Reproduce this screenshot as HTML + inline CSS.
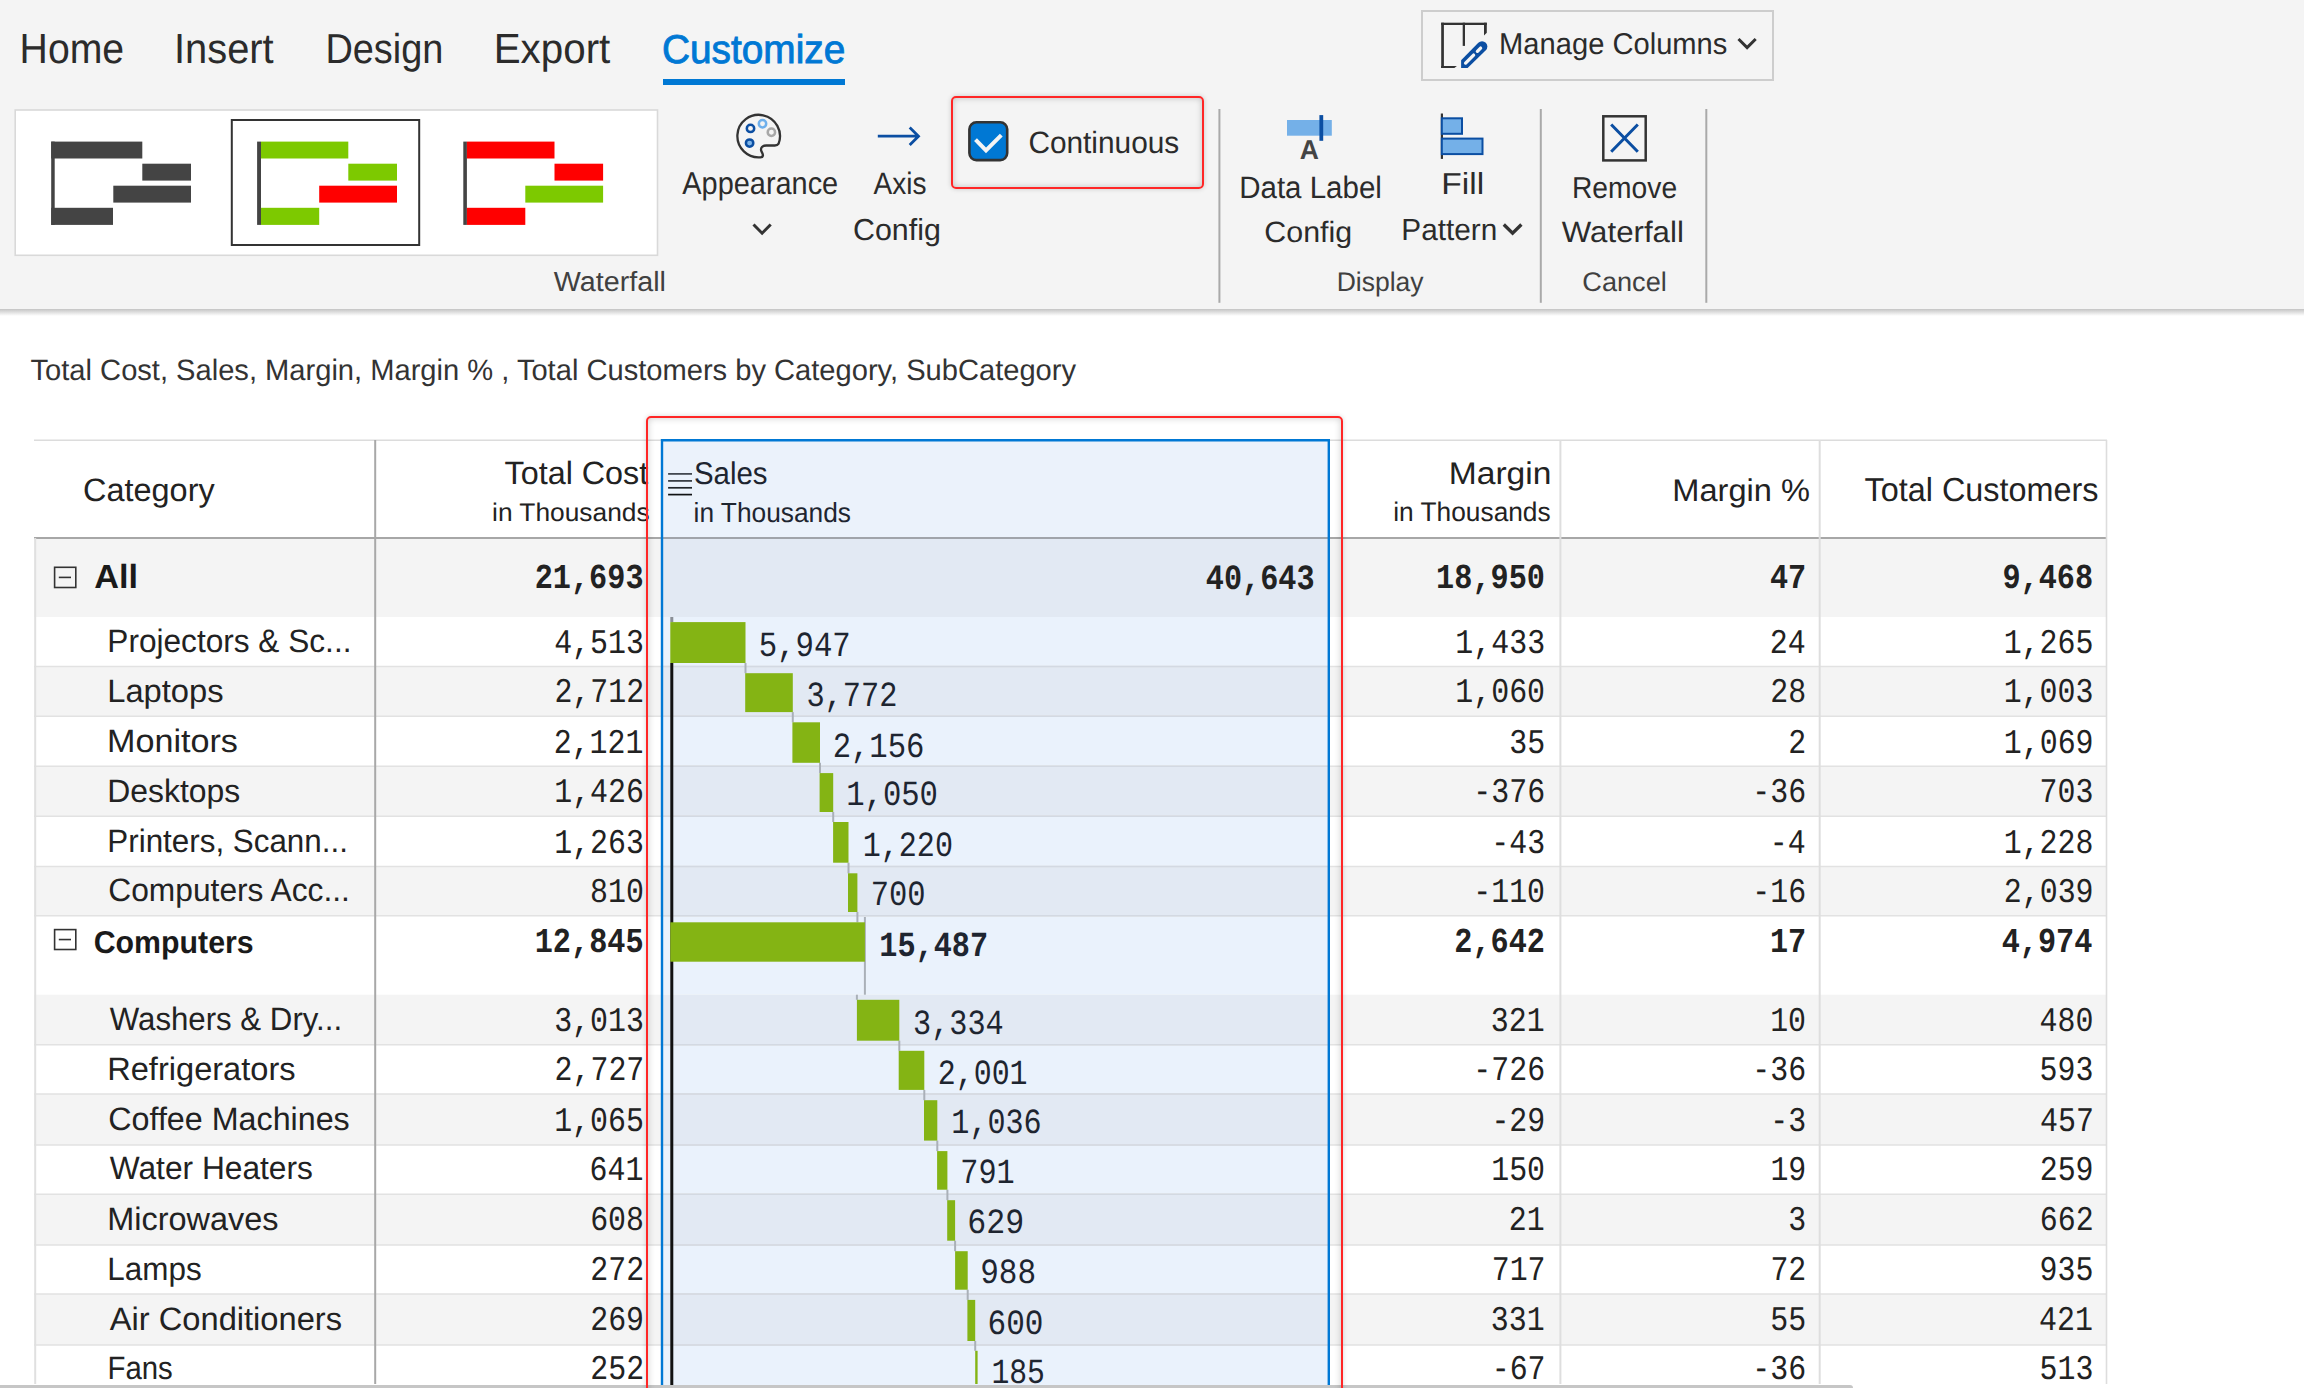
<!DOCTYPE html>
<html><head><meta charset="utf-8"><title>Waterfall</title>
<style>
html,body{margin:0;padding:0;background:#fff;width:2304px;height:1388px;overflow:hidden;font-family:"Liberation Sans",sans-serif;}
#pg{position:relative;width:2304px;height:1388px;overflow:hidden;}
svg{position:absolute;left:0;top:0;}
.hl{position:absolute;box-sizing:border-box;border:2px solid #ff2626;border-radius:5px;}
</style></head><body><div id="pg">
<svg width="2304" height="1388" viewBox="0 0 2304 1388" text-rendering="geometricPrecision">
<rect x="0.00" y="0.00" width="2304.00" height="309.00" fill="#f4f4f4"/>
<defs><linearGradient id="rsh" x1="0" y1="0" x2="0" y2="1"><stop offset="0" stop-color="#c4c4c4"/><stop offset="1" stop-color="#ffffff"/></linearGradient></defs>
<rect x="0.00" y="309.00" width="2304.00" height="7.00" fill="url(#rsh)"/>
<text x="19.58" y="63.00" font-family='"Liberation Sans", sans-serif' font-size="42.08" font-weight="400" fill="#2b2b2b" textLength="104.56" lengthAdjust="spacingAndGlyphs">Home</text>
<text x="174.02" y="63.00" font-family='"Liberation Sans", sans-serif' font-size="42.08" font-weight="400" fill="#2b2b2b" textLength="99.67" lengthAdjust="spacingAndGlyphs">Insert</text>
<text x="325.39" y="63.00" font-family='"Liberation Sans", sans-serif' font-size="41.80" font-weight="400" fill="#2b2b2b" textLength="118.07" lengthAdjust="spacingAndGlyphs">Design</text>
<text x="493.69" y="63.00" font-family='"Liberation Sans", sans-serif' font-size="42.08" font-weight="400" fill="#2b2b2b" textLength="116.61" lengthAdjust="spacingAndGlyphs">Export</text>
<text x="662.03" y="62.70" font-family='"Liberation Sans", sans-serif' font-size="40.26" font-weight="400" fill="#0078d4" textLength="183.29" lengthAdjust="spacingAndGlyphs" stroke="#0078d4" stroke-width="0.90">Customize</text>
<rect x="663.00" y="79.00" width="182.00" height="6.00" fill="#0078d4"/>
<rect x="1422" y="11" width="351" height="69" fill="none" stroke="#cdcdcd" stroke-width="2"/>
<rect x="1441.20" y="22.70" width="2.70" height="45.30" fill="#333"/>
<rect x="1441.20" y="22.70" width="45.60" height="2.30" fill="#333"/>
<rect x="1462.70" y="22.70" width="2.30" height="23.20" fill="#333"/>
<path d="M1441.2,65.9 L1456.9,65.9 L1454.4,68 L1441.2,68 Z" fill="#333"/>
<path d="M1484,22.7 L1486.8,22.7 L1486.8,32.7 L1484,35.6 Z" fill="#333"/>
<path d="M1461.1,68 L1461.1,60.3 L1478.3,42.8 A5.3,5.3 0 0 1 1485.8,50.3 L1467.6,68 Z" fill="#0b4ea2"/>
<path d="M1465.6,63.1 L1473.6,55.1 M1477.4,51.3 L1480.6,48.1" stroke="#f4f4f4" stroke-width="3.3" stroke-linecap="round"/>
<text x="1499.11" y="54.40" font-family='"Liberation Sans", sans-serif' font-size="30.02" font-weight="400" fill="#2b2b2b" textLength="228.24" lengthAdjust="spacingAndGlyphs">Manage Columns</text>
<path d="M1738.5,39 L1747.1,47.6 L1755.7,39" fill="none" stroke="#333" stroke-width="3"/>
<rect x="15.2" y="110" width="642.3" height="145.3" fill="#fff" stroke="#d9d9d9" stroke-width="1.6"/>
<rect x="231.8" y="120" width="187.4" height="125" fill="none" stroke="#333" stroke-width="2"/>
<rect x="51.20" y="141.60" width="91.10" height="16.90" fill="#444"/>
<rect x="51.20" y="141.60" width="3.50" height="83.30" fill="#444"/>
<rect x="142.30" y="163.70" width="48.70" height="16.90" fill="#444"/>
<rect x="113.30" y="185.70" width="77.70" height="16.90" fill="#444"/>
<rect x="51.20" y="207.80" width="61.80" height="17.10" fill="#444"/>
<rect x="257.10" y="141.60" width="3.90" height="83.30" fill="#444"/>
<rect x="261.00" y="141.60" width="87.30" height="16.90" fill="#7dc900"/>
<rect x="348.30" y="163.70" width="48.70" height="16.90" fill="#7dc900"/>
<rect x="319.20" y="185.70" width="77.80" height="16.90" fill="#ff0000"/>
<rect x="261.00" y="207.80" width="58.20" height="17.10" fill="#7dc900"/>
<rect x="463.30" y="141.60" width="3.60" height="83.30" fill="#444"/>
<rect x="466.90" y="141.60" width="87.60" height="16.90" fill="#ff0000"/>
<rect x="554.50" y="163.70" width="48.60" height="16.90" fill="#ff0000"/>
<rect x="525.30" y="185.70" width="77.80" height="16.90" fill="#7dc900"/>
<rect x="466.90" y="207.80" width="58.40" height="17.10" fill="#ff0000"/>
<path d="M760.6,157.3 A21.3,21.3 0 1 1 778.6,143.6 C777.8,145 776.6,145.5 774.8,145.5 L766.2,145.5 C762.4,145.5 760.4,148 761.2,150.6 C761.8,152.6 763.2,153.8 762.9,155.6 C762.6,156.8 761.8,157.3 760.6,157.3 Z" fill="none" stroke="#333" stroke-width="2.3"/>
<circle cx="750.5" cy="128.4" r="3.7" fill="#f4f4f4" stroke="#0b4ea2" stroke-width="2.5"/>
<circle cx="762.5" cy="123.7" r="3.7" fill="#f4f4f4" stroke="#6fb0ec" stroke-width="2.5"/>
<circle cx="771.4" cy="132.2" r="3.7" fill="#f4f4f4" stroke="#a8a8a8" stroke-width="2.5"/>
<circle cx="749.6" cy="143.1" r="3.7" fill="#7fb6ea" stroke="#0b4ea2" stroke-width="2.5"/>
<text x="682.34" y="194.00" font-family='"Liberation Sans", sans-serif' font-size="31.56" font-weight="400" fill="#2b2b2b" textLength="155.84" lengthAdjust="spacingAndGlyphs">Appearance</text>
<path d="M753.5,224.5 L762.1,233.2 L770.7,224.5" fill="none" stroke="#333" stroke-width="3"/>
<path d="M877.8,136.2 L918.5,136.2 M909.7,127.6 L918.5,136.2 L909.7,144.9" fill="none" stroke="#0b4ea2" stroke-width="2.8"/>
<text x="873.45" y="194.00" font-family='"Liberation Sans", sans-serif' font-size="31.00" font-weight="400" fill="#2b2b2b" textLength="52.97" lengthAdjust="spacingAndGlyphs">Axis</text>
<text x="853.06" y="240.00" font-family='"Liberation Sans", sans-serif' font-size="30.30" font-weight="400" fill="#2b2b2b" textLength="87.80" lengthAdjust="spacingAndGlyphs">Config</text>
<rect x="969.4" y="122.3" width="37.8" height="37.8" rx="7" fill="#0078d4" stroke="#333" stroke-width="2.6"/>
<path d="M975.5,139.6 L986,150.4 L1001.3,135.2" fill="none" stroke="#f4f4f4" stroke-width="4"/>
<text x="1028.39" y="153.40" font-family='"Liberation Sans", sans-serif' font-size="30.86" font-weight="400" fill="#2b2b2b" textLength="150.89" lengthAdjust="spacingAndGlyphs">Continuous</text>
<line x1="1219.40" y1="109.00" x2="1219.40" y2="302.80" stroke="#a9a9a9" stroke-width="2.00"/>
<line x1="1540.80" y1="109.00" x2="1540.80" y2="302.80" stroke="#a9a9a9" stroke-width="2.00"/>
<line x1="1706.30" y1="109.00" x2="1706.30" y2="302.80" stroke="#a9a9a9" stroke-width="2.00"/>
<rect x="1287.00" y="120.00" width="44.80" height="15.70" fill="#74b0e8"/>
<rect x="1319.40" y="115.10" width="3.80" height="25.70" fill="#0b4ea2"/>
<text x="1299.84" y="158.90" font-family='"Liberation Sans", sans-serif' font-size="27.35" font-weight="700" fill="#444" textLength="19.16" lengthAdjust="spacingAndGlyphs">A</text>
<text x="1239.18" y="198.30" font-family='"Liberation Sans", sans-serif' font-size="31.00" font-weight="400" fill="#2b2b2b" textLength="142.69" lengthAdjust="spacingAndGlyphs">Data Label</text>
<text x="1264.36" y="242.00" font-family='"Liberation Sans", sans-serif' font-size="29.46" font-weight="400" fill="#2b2b2b" textLength="87.80" lengthAdjust="spacingAndGlyphs">Config</text>
<rect x="1440.80" y="113.50" width="2.20" height="45.40" fill="#333"/>
<rect x="1441.8" y="118.3" width="20.2" height="15.5" fill="#74b0e8" stroke="#0b4ea2" stroke-width="2"/>
<rect x="1441.8" y="138.6" width="40.7" height="15.5" fill="#74b0e8" stroke="#0b4ea2" stroke-width="2"/>
<text x="1441.24" y="193.80" font-family='"Liberation Sans", sans-serif' font-size="30.30" font-weight="400" fill="#2b2b2b" textLength="42.90" lengthAdjust="spacingAndGlyphs">Fill</text>
<text x="1401.36" y="240.00" font-family='"Liberation Sans", sans-serif' font-size="30.44" font-weight="400" fill="#2b2b2b" textLength="95.98" lengthAdjust="spacingAndGlyphs">Pattern</text>
<path d="M1503.8,224.5 L1512.6,233.2 L1521.4,224.5" fill="none" stroke="#333" stroke-width="3.3"/>
<rect x="1603.3" y="116.3" width="42.4" height="44.1" fill="none" stroke="#333" stroke-width="2.5"/>
<path d="M1611.2,124.5 L1637.8,151.7 M1637.8,124.5 L1611.2,151.7" stroke="#0b4ea2" stroke-width="3"/>
<text x="1571.98" y="198.30" font-family='"Liberation Sans", sans-serif' font-size="30.30" font-weight="400" fill="#2b2b2b" textLength="105.17" lengthAdjust="spacingAndGlyphs">Remove</text>
<text x="1561.76" y="242.10" font-family='"Liberation Sans", sans-serif' font-size="29.60" font-weight="400" fill="#2b2b2b" textLength="122.11" lengthAdjust="spacingAndGlyphs">Waterfall</text>
<text x="553.78" y="291.00" font-family='"Liberation Sans", sans-serif' font-size="27.77" font-weight="400" fill="#404040" textLength="112.13" lengthAdjust="spacingAndGlyphs">Waterfall</text>
<text x="1336.63" y="290.80" font-family='"Liberation Sans", sans-serif' font-size="26.93" font-weight="400" fill="#404040" textLength="86.93" lengthAdjust="spacingAndGlyphs">Display</text>
<text x="1582.32" y="290.80" font-family='"Liberation Sans", sans-serif' font-size="26.93" font-weight="400" fill="#404040" textLength="84.49" lengthAdjust="spacingAndGlyphs">Cancel</text>
<text x="30.55" y="379.80" font-family='"Liberation Sans", sans-serif' font-size="29.53" font-weight="400" fill="#333" textLength="1045.50" lengthAdjust="spacingAndGlyphs">Total Cost, Sales, Margin, Margin % , Total Customers by Category, SubCategory</text>
<rect x="34.00" y="440.00" width="2073.00" height="98.00" fill="#ffffff"/>
<rect x="34.00" y="538.00" width="2073.00" height="79.00" fill="#f4f4f4"/>
<rect x="661.00" y="538.00" width="669.00" height="79.00" fill="#e2e9f3"/>
<rect x="34.00" y="617.00" width="2073.00" height="49.50" fill="#ffffff"/>
<rect x="661.00" y="617.00" width="669.00" height="49.50" fill="#eaf2fc"/>
<rect x="34.00" y="666.50" width="2073.00" height="49.80" fill="#f4f4f4"/>
<rect x="661.00" y="666.50" width="669.00" height="49.80" fill="#e2e9f3"/>
<rect x="34.00" y="716.30" width="2073.00" height="49.90" fill="#ffffff"/>
<rect x="661.00" y="716.30" width="669.00" height="49.90" fill="#eaf2fc"/>
<rect x="34.00" y="766.20" width="2073.00" height="50.00" fill="#f4f4f4"/>
<rect x="661.00" y="766.20" width="669.00" height="50.00" fill="#e2e9f3"/>
<rect x="34.00" y="816.20" width="2073.00" height="50.30" fill="#ffffff"/>
<rect x="661.00" y="816.20" width="669.00" height="50.30" fill="#eaf2fc"/>
<rect x="34.00" y="866.50" width="2073.00" height="49.30" fill="#f4f4f4"/>
<rect x="661.00" y="866.50" width="669.00" height="49.30" fill="#e2e9f3"/>
<rect x="34.00" y="915.80" width="2073.00" height="78.90" fill="#ffffff"/>
<rect x="661.00" y="915.80" width="669.00" height="78.90" fill="#eaf2fc"/>
<rect x="34.00" y="994.70" width="2073.00" height="50.10" fill="#f4f4f4"/>
<rect x="661.00" y="994.70" width="669.00" height="50.10" fill="#e2e9f3"/>
<rect x="34.00" y="1044.80" width="2073.00" height="49.20" fill="#ffffff"/>
<rect x="661.00" y="1044.80" width="669.00" height="49.20" fill="#eaf2fc"/>
<rect x="34.00" y="1094.00" width="2073.00" height="51.00" fill="#f4f4f4"/>
<rect x="661.00" y="1094.00" width="669.00" height="51.00" fill="#e2e9f3"/>
<rect x="34.00" y="1145.00" width="2073.00" height="49.20" fill="#ffffff"/>
<rect x="661.00" y="1145.00" width="669.00" height="49.20" fill="#eaf2fc"/>
<rect x="34.00" y="1194.20" width="2073.00" height="50.80" fill="#f4f4f4"/>
<rect x="661.00" y="1194.20" width="669.00" height="50.80" fill="#e2e9f3"/>
<rect x="34.00" y="1245.00" width="2073.00" height="49.00" fill="#ffffff"/>
<rect x="661.00" y="1245.00" width="669.00" height="49.00" fill="#eaf2fc"/>
<rect x="34.00" y="1294.00" width="2073.00" height="51.00" fill="#f4f4f4"/>
<rect x="661.00" y="1294.00" width="669.00" height="51.00" fill="#e2e9f3"/>
<rect x="34.00" y="1345.00" width="2073.00" height="43.00" fill="#ffffff"/>
<rect x="661.00" y="1345.00" width="669.00" height="43.00" fill="#eaf2fc"/>
<rect x="661.00" y="440.00" width="669.00" height="98.00" fill="#ebf2fb"/>
<line x1="34.00" y1="666.50" x2="2107.00" y2="666.50" stroke="#e2e2e2" stroke-width="1.60"/>
<line x1="661.00" y1="666.50" x2="1330.00" y2="666.50" stroke="#d3d9e2" stroke-width="1.60"/>
<line x1="34.00" y1="716.30" x2="2107.00" y2="716.30" stroke="#e2e2e2" stroke-width="1.60"/>
<line x1="661.00" y1="716.30" x2="1330.00" y2="716.30" stroke="#d3d9e2" stroke-width="1.60"/>
<line x1="34.00" y1="766.20" x2="2107.00" y2="766.20" stroke="#e2e2e2" stroke-width="1.60"/>
<line x1="661.00" y1="766.20" x2="1330.00" y2="766.20" stroke="#d3d9e2" stroke-width="1.60"/>
<line x1="34.00" y1="816.20" x2="2107.00" y2="816.20" stroke="#e2e2e2" stroke-width="1.60"/>
<line x1="661.00" y1="816.20" x2="1330.00" y2="816.20" stroke="#d3d9e2" stroke-width="1.60"/>
<line x1="34.00" y1="866.50" x2="2107.00" y2="866.50" stroke="#e2e2e2" stroke-width="1.60"/>
<line x1="661.00" y1="866.50" x2="1330.00" y2="866.50" stroke="#d3d9e2" stroke-width="1.60"/>
<line x1="34.00" y1="915.80" x2="2107.00" y2="915.80" stroke="#e2e2e2" stroke-width="1.60"/>
<line x1="661.00" y1="915.80" x2="1330.00" y2="915.80" stroke="#d3d9e2" stroke-width="1.60"/>
<line x1="34.00" y1="1044.80" x2="2107.00" y2="1044.80" stroke="#e2e2e2" stroke-width="1.60"/>
<line x1="661.00" y1="1044.80" x2="1330.00" y2="1044.80" stroke="#d3d9e2" stroke-width="1.60"/>
<line x1="34.00" y1="1094.00" x2="2107.00" y2="1094.00" stroke="#e2e2e2" stroke-width="1.60"/>
<line x1="661.00" y1="1094.00" x2="1330.00" y2="1094.00" stroke="#d3d9e2" stroke-width="1.60"/>
<line x1="34.00" y1="1145.00" x2="2107.00" y2="1145.00" stroke="#e2e2e2" stroke-width="1.60"/>
<line x1="661.00" y1="1145.00" x2="1330.00" y2="1145.00" stroke="#d3d9e2" stroke-width="1.60"/>
<line x1="34.00" y1="1194.20" x2="2107.00" y2="1194.20" stroke="#e2e2e2" stroke-width="1.60"/>
<line x1="661.00" y1="1194.20" x2="1330.00" y2="1194.20" stroke="#d3d9e2" stroke-width="1.60"/>
<line x1="34.00" y1="1245.00" x2="2107.00" y2="1245.00" stroke="#e2e2e2" stroke-width="1.60"/>
<line x1="661.00" y1="1245.00" x2="1330.00" y2="1245.00" stroke="#d3d9e2" stroke-width="1.60"/>
<line x1="34.00" y1="1294.00" x2="2107.00" y2="1294.00" stroke="#e2e2e2" stroke-width="1.60"/>
<line x1="661.00" y1="1294.00" x2="1330.00" y2="1294.00" stroke="#d3d9e2" stroke-width="1.60"/>
<line x1="34.00" y1="1345.00" x2="2107.00" y2="1345.00" stroke="#e2e2e2" stroke-width="1.60"/>
<line x1="661.00" y1="1345.00" x2="1330.00" y2="1345.00" stroke="#d3d9e2" stroke-width="1.60"/>
<line x1="34.00" y1="440.30" x2="2107.00" y2="440.30" stroke="#dcdcdc" stroke-width="1.40"/>
<line x1="34.00" y1="538.00" x2="2107.00" y2="538.00" stroke="#a7a7a7" stroke-width="2.00"/>
<line x1="661.00" y1="538.00" x2="1330.00" y2="538.00" stroke="#a0a4aa" stroke-width="2.00"/>
<line x1="35.20" y1="538.00" x2="35.20" y2="1384.00" stroke="#e0e0e0" stroke-width="2.00"/>
<line x1="2106.50" y1="440.00" x2="2106.50" y2="1384.00" stroke="#dddddd" stroke-width="1.60"/>
<line x1="375.20" y1="440.00" x2="375.20" y2="1384.00" stroke="#a8a8a8" stroke-width="2.00"/>
<line x1="1560.40" y1="440.00" x2="1560.40" y2="1384.00" stroke="#dedede" stroke-width="2.00"/>
<line x1="1819.70" y1="440.00" x2="1819.70" y2="1384.00" stroke="#dedede" stroke-width="2.00"/>
<text x="83.05" y="501.20" font-family='"Liberation Sans", sans-serif' font-size="32.40" font-weight="400" fill="#222" textLength="131.61" lengthAdjust="spacingAndGlyphs">Category</text>
<text x="504.59" y="484.00" font-family='"Liberation Sans", sans-serif' font-size="32.26" font-weight="400" fill="#222" textLength="143.64" lengthAdjust="spacingAndGlyphs">Total Cost</text>
<text x="492.04" y="521.00" font-family='"Liberation Sans", sans-serif' font-size="25.53" font-weight="400" fill="#222" textLength="157.60" lengthAdjust="spacingAndGlyphs">in Thousands</text>
<text x="693.96" y="483.90" font-family='"Liberation Sans", sans-serif' font-size="31.42" font-weight="400" fill="#1e2530" textLength="73.60" lengthAdjust="spacingAndGlyphs">Sales</text>
<text x="693.55" y="521.70" font-family='"Liberation Sans", sans-serif' font-size="27.63" font-weight="400" fill="#1e2530" textLength="157.40" lengthAdjust="spacingAndGlyphs">in Thousands</text>
<text x="1448.74" y="483.90" font-family='"Liberation Sans", sans-serif' font-size="31.42" font-weight="400" fill="#222" textLength="102.74" lengthAdjust="spacingAndGlyphs">Margin</text>
<text x="1393.25" y="521.40" font-family='"Liberation Sans", sans-serif' font-size="26.79" font-weight="400" fill="#222" textLength="157.40" lengthAdjust="spacingAndGlyphs">in Thousands</text>
<text x="1672.33" y="500.90" font-family='"Liberation Sans", sans-serif' font-size="31.42" font-weight="400" fill="#222" textLength="137.63" lengthAdjust="spacingAndGlyphs">Margin %</text>
<text x="1864.58" y="501.30" font-family='"Liberation Sans", sans-serif' font-size="33.24" font-weight="400" fill="#222" textLength="233.87" lengthAdjust="spacingAndGlyphs">Total Customers</text>
<line x1="668.10" y1="473.90" x2="692.00" y2="473.90" stroke="#3a3f47" stroke-width="1.70"/>
<line x1="668.10" y1="480.90" x2="692.00" y2="480.90" stroke="#30353c" stroke-width="1.70"/>
<line x1="668.10" y1="487.80" x2="692.00" y2="487.80" stroke="#202428" stroke-width="1.70"/>
<line x1="668.10" y1="494.60" x2="692.00" y2="494.60" stroke="#101214" stroke-width="1.70"/>
<text x="94.15" y="588.30" font-family='"Liberation Sans", sans-serif' font-size="33.52" font-weight="700" fill="#1a1a1a" textLength="43.78" lengthAdjust="spacingAndGlyphs">All</text>
<rect x="54.6" y="567.30" width="21.2" height="20.20" fill="none" stroke="#333" stroke-width="1.6"/>
<line x1="58.80" y1="577.40" x2="71.00" y2="577.40" stroke="#333" stroke-width="1.60"/>
<text x="534.69" y="587.80" font-family='"Liberation Mono", monospace' font-size="35.07" font-weight="700" fill="#222" textLength="108.85" lengthAdjust="spacingAndGlyphs">21,693</text>
<text x="1436.10" y="587.80" font-family='"Liberation Mono", monospace' font-size="35.07" font-weight="700" fill="#222" textLength="108.85" lengthAdjust="spacingAndGlyphs">18,950</text>
<text x="1769.94" y="587.80" font-family='"Liberation Mono", monospace' font-size="35.07" font-weight="700" fill="#222" textLength="36.28" lengthAdjust="spacingAndGlyphs">47</text>
<text x="2002.40" y="587.80" font-family='"Liberation Mono", monospace' font-size="35.07" font-weight="700" fill="#222" textLength="90.70" lengthAdjust="spacingAndGlyphs">9,468</text>
<text x="107.31" y="652.20" font-family='"Liberation Sans", sans-serif' font-size="32.40" font-weight="400" fill="#222" textLength="244.18" lengthAdjust="spacingAndGlyphs">Projectors &amp; Sc...</text>
<text x="554.16" y="652.50" font-family='"Liberation Mono", monospace' font-size="34.61" font-weight="400" fill="#222" textLength="89.73" lengthAdjust="spacingAndGlyphs">4,513</text>
<text x="1455.36" y="652.50" font-family='"Liberation Mono", monospace' font-size="34.61" font-weight="400" fill="#222" textLength="89.73" lengthAdjust="spacingAndGlyphs">1,433</text>
<text x="1769.82" y="652.50" font-family='"Liberation Mono", monospace' font-size="34.61" font-weight="400" fill="#222" textLength="35.89" lengthAdjust="spacingAndGlyphs">24</text>
<text x="2003.66" y="652.50" font-family='"Liberation Mono", monospace' font-size="34.61" font-weight="400" fill="#222" textLength="89.73" lengthAdjust="spacingAndGlyphs">1,265</text>
<text x="107.22" y="701.80" font-family='"Liberation Sans", sans-serif' font-size="32.40" font-weight="400" fill="#222" textLength="116.36" lengthAdjust="spacingAndGlyphs">Laptops</text>
<text x="554.38" y="702.10" font-family='"Liberation Mono", monospace' font-size="34.61" font-weight="400" fill="#222" textLength="89.73" lengthAdjust="spacingAndGlyphs">2,712</text>
<text x="1455.31" y="702.10" font-family='"Liberation Mono", monospace' font-size="34.61" font-weight="400" fill="#222" textLength="89.73" lengthAdjust="spacingAndGlyphs">1,060</text>
<text x="1770.28" y="702.10" font-family='"Liberation Mono", monospace' font-size="34.61" font-weight="400" fill="#222" textLength="35.89" lengthAdjust="spacingAndGlyphs">28</text>
<text x="2003.66" y="702.10" font-family='"Liberation Mono", monospace' font-size="34.61" font-weight="400" fill="#222" textLength="89.73" lengthAdjust="spacingAndGlyphs">1,003</text>
<text x="107.10" y="752.20" font-family='"Liberation Sans", sans-serif' font-size="32.40" font-weight="400" fill="#222" textLength="130.83" lengthAdjust="spacingAndGlyphs">Monitors</text>
<text x="553.71" y="752.50" font-family='"Liberation Mono", monospace' font-size="34.61" font-weight="400" fill="#222" textLength="89.73" lengthAdjust="spacingAndGlyphs">2,121</text>
<text x="1509.20" y="752.50" font-family='"Liberation Mono", monospace' font-size="34.61" font-weight="400" fill="#222" textLength="35.89" lengthAdjust="spacingAndGlyphs">35</text>
<text x="1788.37" y="752.50" font-family='"Liberation Mono", monospace' font-size="34.61" font-weight="400" fill="#222" textLength="17.95" lengthAdjust="spacingAndGlyphs">2</text>
<text x="2003.84" y="752.50" font-family='"Liberation Mono", monospace' font-size="34.61" font-weight="400" fill="#222" textLength="89.73" lengthAdjust="spacingAndGlyphs">1,069</text>
<text x="107.29" y="801.80" font-family='"Liberation Sans", sans-serif' font-size="32.40" font-weight="400" fill="#222" textLength="132.87" lengthAdjust="spacingAndGlyphs">Desktops</text>
<text x="554.21" y="802.10" font-family='"Liberation Mono", monospace' font-size="34.61" font-weight="400" fill="#222" textLength="89.73" lengthAdjust="spacingAndGlyphs">1,426</text>
<text x="1473.35" y="802.10" font-family='"Liberation Mono", monospace' font-size="34.61" font-weight="400" fill="#222" textLength="71.79" lengthAdjust="spacingAndGlyphs">-376</text>
<text x="1752.30" y="802.10" font-family='"Liberation Mono", monospace' font-size="34.61" font-weight="400" fill="#222" textLength="53.84" lengthAdjust="spacingAndGlyphs">-36</text>
<text x="2039.56" y="802.10" font-family='"Liberation Mono", monospace' font-size="34.61" font-weight="400" fill="#222" textLength="53.84" lengthAdjust="spacingAndGlyphs">703</text>
<text x="107.33" y="852.40" font-family='"Liberation Sans", sans-serif' font-size="32.40" font-weight="400" fill="#222" textLength="240.54" lengthAdjust="spacingAndGlyphs">Printers, Scann...</text>
<text x="554.16" y="852.70" font-family='"Liberation Mono", monospace' font-size="34.61" font-weight="400" fill="#222" textLength="89.73" lengthAdjust="spacingAndGlyphs">1,263</text>
<text x="1491.26" y="852.70" font-family='"Liberation Mono", monospace' font-size="34.61" font-weight="400" fill="#222" textLength="53.84" lengthAdjust="spacingAndGlyphs">-43</text>
<text x="1769.82" y="852.70" font-family='"Liberation Mono", monospace' font-size="34.61" font-weight="400" fill="#222" textLength="35.89" lengthAdjust="spacingAndGlyphs">-4</text>
<text x="2003.74" y="852.70" font-family='"Liberation Mono", monospace' font-size="34.61" font-weight="400" fill="#222" textLength="89.73" lengthAdjust="spacingAndGlyphs">1,228</text>
<text x="108.30" y="901.30" font-family='"Liberation Sans", sans-serif' font-size="32.40" font-weight="400" fill="#222" textLength="241.58" lengthAdjust="spacingAndGlyphs">Computers Acc...</text>
<text x="590.00" y="901.60" font-family='"Liberation Mono", monospace' font-size="34.61" font-weight="400" fill="#222" textLength="53.84" lengthAdjust="spacingAndGlyphs">810</text>
<text x="1473.25" y="901.60" font-family='"Liberation Mono", monospace' font-size="34.61" font-weight="400" fill="#222" textLength="71.79" lengthAdjust="spacingAndGlyphs">-110</text>
<text x="1752.30" y="901.60" font-family='"Liberation Mono", monospace' font-size="34.61" font-weight="400" fill="#222" textLength="53.84" lengthAdjust="spacingAndGlyphs">-16</text>
<text x="2003.84" y="901.60" font-family='"Liberation Mono", monospace' font-size="34.61" font-weight="400" fill="#222" textLength="89.73" lengthAdjust="spacingAndGlyphs">2,039</text>
<text x="93.66" y="952.60" font-family='"Liberation Sans", sans-serif' font-size="31.70" font-weight="700" fill="#1a1a1a" textLength="159.99" lengthAdjust="spacingAndGlyphs">Computers</text>
<rect x="54.6" y="929.60" width="21.2" height="19.90" fill="none" stroke="#333" stroke-width="1.6"/>
<line x1="58.80" y1="939.55" x2="71.00" y2="939.55" stroke="#333" stroke-width="1.60"/>
<text x="534.72" y="952.10" font-family='"Liberation Mono", monospace' font-size="35.07" font-weight="700" fill="#222" textLength="108.85" lengthAdjust="spacingAndGlyphs">12,845</text>
<text x="1454.27" y="952.10" font-family='"Liberation Mono", monospace' font-size="35.07" font-weight="700" fill="#222" textLength="90.70" lengthAdjust="spacingAndGlyphs">2,642</text>
<text x="1769.94" y="952.10" font-family='"Liberation Mono", monospace' font-size="35.07" font-weight="700" fill="#222" textLength="36.28" lengthAdjust="spacingAndGlyphs">17</text>
<text x="2001.70" y="952.10" font-family='"Liberation Mono", monospace' font-size="35.07" font-weight="700" fill="#222" textLength="90.70" lengthAdjust="spacingAndGlyphs">4,974</text>
<text x="109.76" y="1030.30" font-family='"Liberation Sans", sans-serif' font-size="32.40" font-weight="400" fill="#222" textLength="232.34" lengthAdjust="spacingAndGlyphs">Washers &amp; Dry...</text>
<text x="554.16" y="1030.60" font-family='"Liberation Mono", monospace' font-size="34.61" font-weight="400" fill="#222" textLength="89.73" lengthAdjust="spacingAndGlyphs">3,013</text>
<text x="1490.81" y="1030.60" font-family='"Liberation Mono", monospace' font-size="34.61" font-weight="400" fill="#222" textLength="53.84" lengthAdjust="spacingAndGlyphs">321</text>
<text x="1770.15" y="1030.60" font-family='"Liberation Mono", monospace' font-size="34.61" font-weight="400" fill="#222" textLength="35.89" lengthAdjust="spacingAndGlyphs">10</text>
<text x="2039.50" y="1030.60" font-family='"Liberation Mono", monospace' font-size="34.61" font-weight="400" fill="#222" textLength="53.84" lengthAdjust="spacingAndGlyphs">480</text>
<text x="107.23" y="1079.80" font-family='"Liberation Sans", sans-serif' font-size="32.40" font-weight="400" fill="#222" textLength="188.35" lengthAdjust="spacingAndGlyphs">Refrigerators</text>
<text x="554.60" y="1080.10" font-family='"Liberation Mono", monospace' font-size="34.61" font-weight="400" fill="#222" textLength="89.73" lengthAdjust="spacingAndGlyphs">2,727</text>
<text x="1473.35" y="1080.10" font-family='"Liberation Mono", monospace' font-size="34.61" font-weight="400" fill="#222" textLength="71.79" lengthAdjust="spacingAndGlyphs">-726</text>
<text x="1752.30" y="1080.10" font-family='"Liberation Mono", monospace' font-size="34.61" font-weight="400" fill="#222" textLength="53.84" lengthAdjust="spacingAndGlyphs">-36</text>
<text x="2039.56" y="1080.10" font-family='"Liberation Mono", monospace' font-size="34.61" font-weight="400" fill="#222" textLength="53.84" lengthAdjust="spacingAndGlyphs">593</text>
<text x="108.27" y="1130.40" font-family='"Liberation Sans", sans-serif' font-size="32.40" font-weight="400" fill="#222" textLength="241.50" lengthAdjust="spacingAndGlyphs">Coffee Machines</text>
<text x="554.16" y="1130.70" font-family='"Liberation Mono", monospace' font-size="34.61" font-weight="400" fill="#222" textLength="89.73" lengthAdjust="spacingAndGlyphs">1,065</text>
<text x="1491.43" y="1130.70" font-family='"Liberation Mono", monospace' font-size="34.61" font-weight="400" fill="#222" textLength="53.84" lengthAdjust="spacingAndGlyphs">-29</text>
<text x="1770.20" y="1130.70" font-family='"Liberation Mono", monospace' font-size="34.61" font-weight="400" fill="#222" textLength="35.89" lengthAdjust="spacingAndGlyphs">-3</text>
<text x="2040.00" y="1130.70" font-family='"Liberation Mono", monospace' font-size="34.61" font-weight="400" fill="#222" textLength="53.84" lengthAdjust="spacingAndGlyphs">457</text>
<text x="109.76" y="1179.30" font-family='"Liberation Sans", sans-serif' font-size="32.40" font-weight="400" fill="#222" textLength="203.08" lengthAdjust="spacingAndGlyphs">Water Heaters</text>
<text x="589.61" y="1179.60" font-family='"Liberation Mono", monospace' font-size="34.61" font-weight="400" fill="#222" textLength="53.84" lengthAdjust="spacingAndGlyphs">641</text>
<text x="1491.20" y="1179.60" font-family='"Liberation Mono", monospace' font-size="34.61" font-weight="400" fill="#222" textLength="53.84" lengthAdjust="spacingAndGlyphs">150</text>
<text x="1770.38" y="1179.60" font-family='"Liberation Mono", monospace' font-size="34.61" font-weight="400" fill="#222" textLength="35.89" lengthAdjust="spacingAndGlyphs">19</text>
<text x="2039.73" y="1179.60" font-family='"Liberation Mono", monospace' font-size="34.61" font-weight="400" fill="#222" textLength="53.84" lengthAdjust="spacingAndGlyphs">259</text>
<text x="107.24" y="1229.50" font-family='"Liberation Sans", sans-serif' font-size="32.40" font-weight="400" fill="#222" textLength="171.23" lengthAdjust="spacingAndGlyphs">Microwaves</text>
<text x="590.13" y="1229.80" font-family='"Liberation Mono", monospace' font-size="34.61" font-weight="400" fill="#222" textLength="53.84" lengthAdjust="spacingAndGlyphs">608</text>
<text x="1508.75" y="1229.80" font-family='"Liberation Mono", monospace' font-size="34.61" font-weight="400" fill="#222" textLength="35.89" lengthAdjust="spacingAndGlyphs">21</text>
<text x="1788.15" y="1229.80" font-family='"Liberation Mono", monospace' font-size="34.61" font-weight="400" fill="#222" textLength="17.95" lengthAdjust="spacingAndGlyphs">3</text>
<text x="2039.78" y="1229.80" font-family='"Liberation Mono", monospace' font-size="34.61" font-weight="400" fill="#222" textLength="53.84" lengthAdjust="spacingAndGlyphs">662</text>
<text x="107.32" y="1279.80" font-family='"Liberation Sans", sans-serif' font-size="32.40" font-weight="400" fill="#222" textLength="94.42" lengthAdjust="spacingAndGlyphs">Lamps</text>
<text x="590.28" y="1280.10" font-family='"Liberation Mono", monospace' font-size="34.61" font-weight="400" fill="#222" textLength="53.84" lengthAdjust="spacingAndGlyphs">272</text>
<text x="1491.70" y="1280.10" font-family='"Liberation Mono", monospace' font-size="34.61" font-weight="400" fill="#222" textLength="53.84" lengthAdjust="spacingAndGlyphs">717</text>
<text x="1770.42" y="1280.10" font-family='"Liberation Mono", monospace' font-size="34.61" font-weight="400" fill="#222" textLength="35.89" lengthAdjust="spacingAndGlyphs">72</text>
<text x="2039.56" y="1280.10" font-family='"Liberation Mono", monospace' font-size="34.61" font-weight="400" fill="#222" textLength="53.84" lengthAdjust="spacingAndGlyphs">935</text>
<text x="109.84" y="1330.00" font-family='"Liberation Sans", sans-serif' font-size="32.40" font-weight="400" fill="#222" textLength="232.14" lengthAdjust="spacingAndGlyphs">Air Conditioners</text>
<text x="590.23" y="1330.30" font-family='"Liberation Mono", monospace' font-size="34.61" font-weight="400" fill="#222" textLength="53.84" lengthAdjust="spacingAndGlyphs">269</text>
<text x="1490.81" y="1330.30" font-family='"Liberation Mono", monospace' font-size="34.61" font-weight="400" fill="#222" textLength="53.84" lengthAdjust="spacingAndGlyphs">331</text>
<text x="1770.20" y="1330.30" font-family='"Liberation Mono", monospace' font-size="34.61" font-weight="400" fill="#222" textLength="35.89" lengthAdjust="spacingAndGlyphs">55</text>
<text x="2039.11" y="1330.30" font-family='"Liberation Mono", monospace' font-size="34.61" font-weight="400" fill="#222" textLength="53.84" lengthAdjust="spacingAndGlyphs">421</text>
<text x="107.49" y="1378.70" font-family='"Liberation Sans", sans-serif' font-size="32.40" font-weight="400" fill="#222" textLength="65.27" lengthAdjust="spacingAndGlyphs">Fans</text>
<text x="590.28" y="1379.00" font-family='"Liberation Mono", monospace' font-size="34.61" font-weight="400" fill="#222" textLength="53.84" lengthAdjust="spacingAndGlyphs">252</text>
<text x="1491.70" y="1379.00" font-family='"Liberation Mono", monospace' font-size="34.61" font-weight="400" fill="#222" textLength="53.84" lengthAdjust="spacingAndGlyphs">-67</text>
<text x="1752.30" y="1379.00" font-family='"Liberation Mono", monospace' font-size="34.61" font-weight="400" fill="#222" textLength="53.84" lengthAdjust="spacingAndGlyphs">-36</text>
<text x="2039.56" y="1379.00" font-family='"Liberation Mono", monospace' font-size="34.61" font-weight="400" fill="#222" textLength="53.84" lengthAdjust="spacingAndGlyphs">513</text>
<text x="1205.75" y="588.50" font-family='"Liberation Mono", monospace' font-size="35.52" font-weight="700" fill="#222" textLength="108.88" lengthAdjust="spacingAndGlyphs">40,643</text>
<line x1="671.80" y1="663.00" x2="671.80" y2="1388.00" stroke="#111" stroke-width="3.00"/>
<line x1="671.80" y1="617.00" x2="671.80" y2="622.10" stroke="#8a8f96" stroke-width="3.00"/>
<line x1="745.50" y1="663.00" x2="745.50" y2="673.20" stroke="#aab0b8" stroke-width="2.00"/>
<line x1="792.80" y1="712.10" x2="792.80" y2="722.30" stroke="#aab0b8" stroke-width="2.00"/>
<line x1="820.00" y1="762.80" x2="820.00" y2="773.10" stroke="#aab0b8" stroke-width="2.00"/>
<line x1="833.20" y1="812.00" x2="833.20" y2="822.00" stroke="#aab0b8" stroke-width="2.00"/>
<line x1="848.50" y1="862.70" x2="848.50" y2="873.30" stroke="#aab0b8" stroke-width="2.00"/>
<line x1="857.40" y1="912.00" x2="857.40" y2="922.30" stroke="#aab0b8" stroke-width="2.00"/>
<line x1="864.90" y1="917.00" x2="864.90" y2="994.70" stroke="#aab0b8" stroke-width="2.00"/>
<line x1="856.90" y1="994.70" x2="856.90" y2="999.80" stroke="#aab0b8" stroke-width="2.00"/>
<line x1="899.30" y1="1040.70" x2="899.30" y2="1050.80" stroke="#aab0b8" stroke-width="2.00"/>
<line x1="924.30" y1="1089.90" x2="924.30" y2="1100.20" stroke="#aab0b8" stroke-width="2.00"/>
<line x1="937.30" y1="1140.60" x2="937.30" y2="1151.10" stroke="#aab0b8" stroke-width="2.00"/>
<line x1="947.40" y1="1189.70" x2="947.40" y2="1200.20" stroke="#aab0b8" stroke-width="2.00"/>
<line x1="955.10" y1="1240.70" x2="955.10" y2="1251.20" stroke="#aab0b8" stroke-width="2.00"/>
<line x1="967.70" y1="1289.70" x2="967.70" y2="1299.90" stroke="#aab0b8" stroke-width="2.00"/>
<line x1="975.20" y1="1341.00" x2="975.20" y2="1350.80" stroke="#aab0b8" stroke-width="2.00"/>
<rect x="670.30" y="622.10" width="75.20" height="40.90" fill="#84b414"/>
<rect x="745.20" y="673.20" width="47.60" height="38.90" fill="#84b414"/>
<rect x="792.40" y="722.30" width="27.60" height="40.50" fill="#84b414"/>
<rect x="819.60" y="773.10" width="13.60" height="38.90" fill="#84b414"/>
<rect x="833.10" y="822.00" width="15.40" height="40.70" fill="#84b414"/>
<rect x="848.00" y="873.30" width="9.40" height="38.70" fill="#84b414"/>
<rect x="670.30" y="922.30" width="194.60" height="39.40" fill="#84b414"/>
<rect x="856.90" y="999.80" width="42.40" height="40.90" fill="#84b414"/>
<rect x="898.70" y="1050.80" width="25.60" height="39.10" fill="#84b414"/>
<rect x="924.00" y="1100.20" width="13.30" height="40.40" fill="#84b414"/>
<rect x="937.10" y="1151.10" width="10.30" height="38.60" fill="#84b414"/>
<rect x="947.20" y="1200.20" width="7.90" height="40.50" fill="#84b414"/>
<rect x="955.10" y="1251.20" width="12.60" height="38.50" fill="#84b414"/>
<rect x="967.40" y="1299.90" width="7.80" height="41.10" fill="#84b414"/>
<rect x="975.20" y="1350.80" width="2.40" height="33.20" fill="#84b414"/>
<text x="758.68" y="656.10" font-family='"Liberation Mono", monospace' font-size="35.37" font-weight="400" fill="#1e2530" textLength="92.12" lengthAdjust="spacingAndGlyphs">5,947</text>
<text x="806.40" y="705.60" font-family='"Liberation Mono", monospace' font-size="35.37" font-weight="400" fill="#1e2530" textLength="91.04" lengthAdjust="spacingAndGlyphs">3,772</text>
<text x="832.65" y="756.80" font-family='"Liberation Mono", monospace' font-size="35.37" font-weight="400" fill="#1e2530" textLength="91.84" lengthAdjust="spacingAndGlyphs">2,156</text>
<text x="846.19" y="805.20" font-family='"Liberation Mono", monospace' font-size="35.37" font-weight="400" fill="#1e2530" textLength="91.79" lengthAdjust="spacingAndGlyphs">1,050</text>
<text x="862.73" y="855.90" font-family='"Liberation Mono", monospace' font-size="35.37" font-weight="400" fill="#1e2530" textLength="90.22" lengthAdjust="spacingAndGlyphs">1,220</text>
<text x="870.75" y="904.50" font-family='"Liberation Mono", monospace' font-size="35.37" font-weight="400" fill="#1e2530" textLength="54.93" lengthAdjust="spacingAndGlyphs">700</text>
<text x="879.26" y="955.80" font-family='"Liberation Mono", monospace' font-size="35.37" font-weight="700" fill="#1e2530" textLength="108.76" lengthAdjust="spacingAndGlyphs">15,487</text>
<text x="913.01" y="1033.90" font-family='"Liberation Mono", monospace' font-size="35.37" font-weight="400" fill="#1e2530" textLength="90.73" lengthAdjust="spacingAndGlyphs">3,334</text>
<text x="937.80" y="1083.80" font-family='"Liberation Mono", monospace' font-size="35.37" font-weight="400" fill="#1e2530" textLength="89.75" lengthAdjust="spacingAndGlyphs">2,001</text>
<text x="951.32" y="1133.00" font-family='"Liberation Mono", monospace' font-size="35.37" font-weight="400" fill="#1e2530" textLength="90.33" lengthAdjust="spacingAndGlyphs">1,036</text>
<text x="960.27" y="1182.90" font-family='"Liberation Mono", monospace' font-size="35.37" font-weight="400" fill="#1e2530" textLength="54.39" lengthAdjust="spacingAndGlyphs">791</text>
<text x="967.37" y="1233.20" font-family='"Liberation Mono", monospace' font-size="35.37" font-weight="400" fill="#1e2530" textLength="56.92" lengthAdjust="spacingAndGlyphs">629</text>
<text x="980.26" y="1282.60" font-family='"Liberation Mono", monospace' font-size="35.37" font-weight="400" fill="#1e2530" textLength="55.88" lengthAdjust="spacingAndGlyphs">988</text>
<text x="987.61" y="1333.60" font-family='"Liberation Mono", monospace' font-size="35.37" font-weight="400" fill="#1e2530" textLength="55.90" lengthAdjust="spacingAndGlyphs">600</text>
<text x="991.45" y="1383.00" font-family='"Liberation Mono", monospace' font-size="35.37" font-weight="400" fill="#1e2530" textLength="53.54" lengthAdjust="spacingAndGlyphs">185</text>
<path d="M662,1388 L662,440.3 L1328.8,440.3 L1328.8,1388" fill="none" stroke="#0078d4" stroke-width="2.4"/>
<rect x="-6" y="1385" width="1859" height="8" rx="3" fill="#c6c6c6"/>
</svg>
<div class="hl" style="left:951px;top:96px;width:253px;height:92.5px;box-shadow:0 0 5px rgba(0,0,0,0.18), inset 0 0 6px rgba(0,0,0,0.22);"></div>
<div class="hl" style="left:646px;top:416.3px;width:697.3px;height:990px;box-shadow:0 0 5px rgba(0,0,0,0.16), inset 0 0 7px rgba(0,0,0,0.20);"></div>
</div></body></html>
